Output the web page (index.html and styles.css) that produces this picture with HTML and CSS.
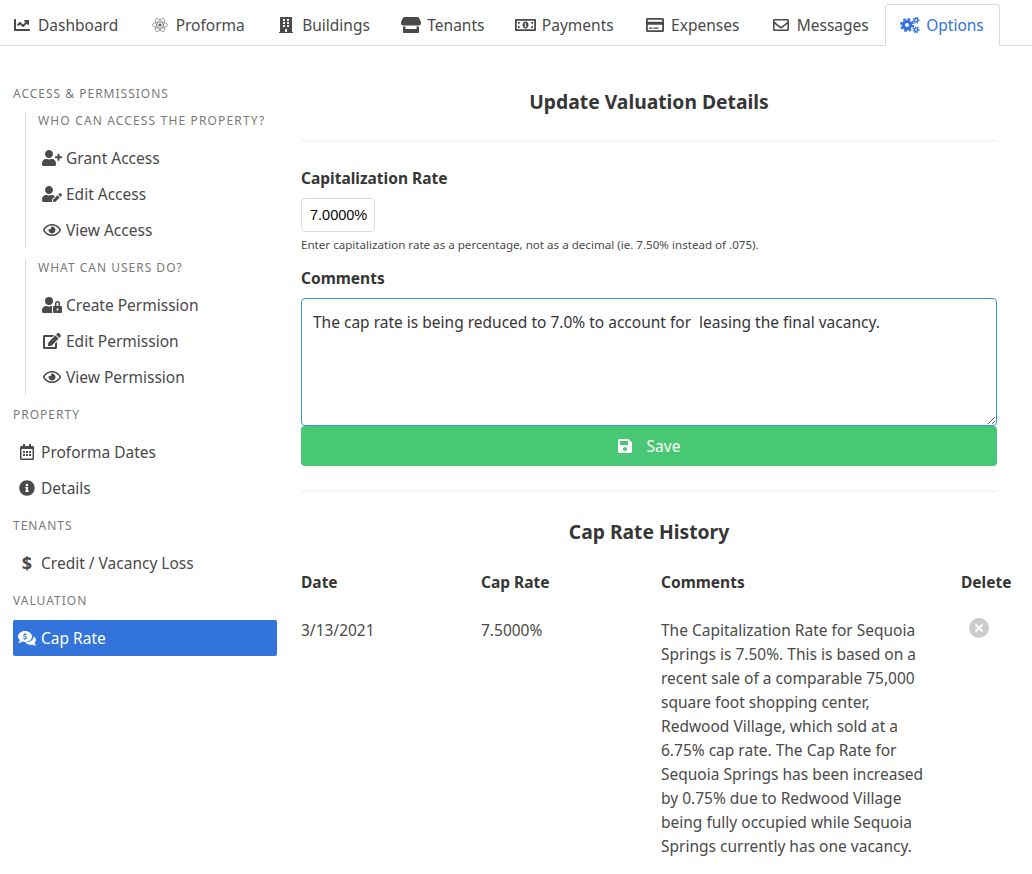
FILE: index.html
```html
<!DOCTYPE html>
<html>
<head>
    <meta charset="UTF-8">
    <title>Update Valuation Details</title>
    <link rel="stylesheet" href="styles.css">
</head>
<body>
<!--tabs-->
<ul class="tabs">
    <li><a><span class="icon"><svg width="16" height="16" viewBox="0 0 512 512"><path d="M496 384H64V80c0-8.84-7.16-16-16-16H16C7.16 64 0 71.16 0 80v336c0 17.67 14.33 32 32 32h464c8.84 0 16-7.16 16-16v-32c0-8.84-7.16-16-16-16zM464 96H345.94c-21.38 0-32.09 25.85-16.97 40.97l32.4 32.4L288 242.75l-73.37-73.37c-12.5-12.5-32.76-12.5-45.25 0l-68.69 68.69c-6.25 6.25-6.25 16.38 0 22.63l22.62 22.62c6.25 6.25 16.38 6.25 22.63 0L192 237.25l73.37 73.37c12.5 12.5 32.76 12.5 45.25 0l96-96 32.4 32.4c15.12 15.12 40.97 4.41 40.97-16.97V112c.01-8.84-7.15-16-15.99-16z"/></svg></span>Dashboard</a></li>
    <li><a><span class="icon"><svg class="outline atom" width="16" height="16" viewBox="0 0 16 16"><ellipse cx="8" cy="8" rx="7.5" ry="3"/><ellipse cx="8" cy="8" rx="7.5" ry="3" transform="rotate(60 8 8)"/><ellipse cx="8" cy="8" rx="7.5" ry="3" transform="rotate(120 8 8)"/><circle cx="8" cy="8" r="1.200" fill="#4a4a4a"/></svg></span>Proforma</a></li>
    <li><a><span class="icon"><svg width="14" height="16" viewBox="0 0 448 512"><path d="M436 480h-20V24c0-13.255-10.745-24-24-24H56C42.745 0 32 10.745 32 24v456H12c-6.627 0-12 5.373-12 12v20h448v-20c0-6.627-5.373-12-12-12zM128 76c0-6.627 5.373-12 12-12h40c6.627 0 12 5.373 12 12v40c0 6.627-5.373 12-12 12h-40c-6.627 0-12-5.373-12-12V76zm0 96c0-6.627 5.373-12 12-12h40c6.627 0 12 5.373 12 12v40c0 6.627-5.373 12-12 12h-40c-6.627 0-12-5.373-12-12v-40zm52 148h-40c-6.627 0-12-5.373-12-12v-40c0-6.627 5.373-12 12-12h40c6.627 0 12 5.373 12 12v40c0 6.627-5.373 12-12 12zm76 160h-64v-84c0-6.627 5.373-12 12-12h40c6.627 0 12 5.373 12 12v84zm64-172c0 6.627-5.373 12-12 12h-40c-6.627 0-12-5.373-12-12v-40c0-6.627 5.373-12 12-12h40c6.627 0 12 5.373 12 12v40zm0-96c0 6.627-5.373 12-12 12h-40c-6.627 0-12-5.373-12-12v-40c0-6.627 5.373-12 12-12h40c6.627 0 12 5.373 12 12v40zm0-96c0 6.627-5.373 12-12 12h-40c-6.627 0-12-5.373-12-12V76c0-6.627 5.373-12 12-12h40c6.627 0 12 5.373 12 12v40z"/></svg></span>Buildings</a></li>
    <li><a><span class="icon"><svg width="20" height="16" viewBox="0 0 20 16"><path d="M3.200 0h13.600c.5 0 .9.3 1.100.7L20 5v1.200c0 1.300-1.200 2.300-2.500 2.300H2.500C1.200 8.500 0 7.500 0 6.200V5L2.100.7C2.300.3 2.700 0 3.200 0zM2 9.500h2.500V12h11V9.500H18V15c0 .6-.4 1-1 1H3c-.6 0-1-.4-1-1z"/></svg></span>Tenants</a></li>
    <li><a><span class="icon"><svg width="21" height="16" viewBox="0 0 21 16"><path fill-rule="evenodd" d="M1 2h19c.6 0 1 .4 1 1v10c0 .6-.4 1-1 1H1c-.6 0-1-.4-1-1V3c0-.6.4-1 1-1zm.8 1.800v8.400h17.400V3.800zM3 5h2.200C5 6.200 4.200 7 3 7.200zm12.800 0H18v2.200c-1.200-.2-2-1-2.200-2.200zM3 8.800c1.200.2 2 1 2.200 2.200H3zM18 8.800V11h-2.200c.2-1.200 1-2 2.200-2.200zM10.500 4.500c1.800 0 3 1.600 3 3.500s-1.200 3.500-3 3.500-3-1.600-3-3.500 1.200-3.500 3-3.500z"/><path d="M9.600 6.300h1.300v3h.6v.8H9.500v-.8h.5V7.200h-.4z" fill="#fff"/></svg></span>Payments</a></li>
    <li><a><span class="icon"><svg width="18" height="16" viewBox="0 0 18 16"><path fill-rule="evenodd" d="M1.500 1h15c.8 0 1.500.7 1.500 1.500v11c0 .8-.7 1.500-1.500 1.500h-15C.7 15 0 14.300 0 13.500v-11C0 1.700.7 1 1.500 1zm.3 6.800v5.400h14.400V7.800zm0-5v1.900h14.400V2.800z"/><rect x="3" y="10.500" width="3.500" height="1.300"/><rect x="7.500" y="10.500" width="5" height="1.300"/></svg></span>Expenses</a></li>
    <li><a><span class="icon"><svg width="16" height="16" viewBox="0 0 16 16"><path fill-rule="evenodd" d="M1.500 2h13c.8 0 1.500.7 1.500 1.500v9c0 .8-.7 1.500-1.500 1.500h-13C.7 14 0 13.300 0 12.500v-9C0 2.700.7 2 1.500 2zm.1 1.500v1.300c.8.700 2 1.600 4.700 3.800.6.500 1.200 1 1.700 1s1.100-.5 1.700-1c2.700-2.200 3.900-3.100 4.700-3.800V3.500zm0 3.300v5.700h12.800V6.800c-.7.600-1.700 1.400-3.700 3-.8.700-1.800 1.700-2.700 1.700s-1.900-1-2.700-1.700c-2-1.600-3-2.400-3.700-3z"/></svg></span>Messages</a></li>
    <li class="active"><a><span class="icon"><svg class="outline" width="20" height="16" viewBox="0 0 20 16"><circle cx="7" cy="8" r="3.600" stroke-width="3.200"/><circle cx="7" cy="8" r="5.900" stroke-width="2.200" stroke-dasharray="2.600 2.030"/><circle cx="16" cy="3.200" r="1.700" stroke-width="1.400"/><circle cx="16" cy="3.200" r="2.900" stroke-width="1.200" stroke-dasharray="1.300 1.130"/><circle cx="16" cy="12.800" r="1.700" stroke-width="1.400"/><circle cx="16" cy="12.800" r="2.900" stroke-width="1.200" stroke-dasharray="1.300 1.130"/></svg></span>Options</a></li>
</ul>

<div class="columns">
    <!--left menu-->
    <aside class="menu">
        <p class="menuLabel">Access &amp; Permissions</p>
        <div class="subList first">
            <p class="menuLabel">Who can access the property?</p>
            <a class="menuItem"><span class="mIcon"><svg width="20" height="16" viewBox="0 0 640 512"><path d="M224 256c70.700 0 128-57.300 128-128S294.700 0 224 0 96 57.300 96 128s57.300 128 128 128zm89.600 32h-16.700c-22.200 10.200-46.900 16-72.900 16s-50.600-5.800-72.900-16h-16.700C60.200 288 0 348.200 0 422.400V464c0 26.500 21.500 48 48 48h352c26.500 0 48-21.500 48-48v-41.600c0-74.200-60.200-134.400-134.400-134.400zM624 200h-64v-64c0-8.800-7.200-16-16-16h-32c-8.800 0-16 7.200-16 16v64h-64c-8.800 0-16 7.200-16 16v32c0 8.800 7.200 16 16 16h64v64c0 8.800 7.200 16 16 16h32c8.800 0 16-7.200 16-16v-64h64c8.800 0 16-7.200 16-16v-32c0-8.800-7.200-16-16-16z"/></svg></span>Grant Access</a>
            <a class="menuItem"><span class="mIcon"><svg width="20" height="16" viewBox="0 0 640 512"><path d="M224 256c70.700 0 128-57.300 128-128S294.700 0 224 0 96 57.300 96 128s57.300 128 128 128zm89.600 32h-16.700c-22.200 10.200-46.900 16-72.900 16s-50.600-5.800-72.900-16h-16.700C60.200 288 0 348.200 0 422.400V464c0 26.500 21.500 48 48 48h275c-2.400-6.800-3.200-14-2.400-21.300l6.800-60.900 1.200-11.100 7.900-7.900 77.300-77.300c-24.500-27.700-60-45.500-99.900-45.500zm45.300 145.300l-6.800 61c-1.100 10.200 7.500 18.800 17.600 17.600l60.900-6.800 137.900-137.900-71.700-71.700zM633 268.900L595.100 231c-9.300-9.300-24.500-9.300-33.800 0l-37.800 37.800-4.100 4.100 71.800 71.700 41.800-41.800c9.300-9.400 9.300-24.500 0-33.900z"/></svg></span>Edit Access</a>
            <a class="menuItem"><span class="mIcon"><svg width="18" height="16" viewBox="0 0 576 512"><path d="M288 144a110.940 110.940 0 0 0-31.240 5 55.400 55.400 0 0 1 7.240 27 56 56 0 0 1-56 56 55.400 55.400 0 0 1-27-7.240A111.710 111.710 0 1 0 288 144zm284.520 97.400C518.290 135.590 410.930 64 288 64S57.680 135.640 3.480 241.410a32.350 32.350 0 0 0 0 29.190C57.710 376.410 165.070 448 288 448s230.320-71.640 284.520-177.410a32.350 32.350 0 0 0 0-29.190zM288 400c-98.650 0-189.090-55-237.930-144C98.910 167 189.340 112 288 112s189.090 55 237.930 144C477.100 345 386.660 400 288 400z"/></svg></span>View Access</a>
        </div>
        <div class="subList">
            <p class="menuLabel">What can users do?</p>
            <a class="menuItem"><span class="mIcon"><svg width="20" height="16" viewBox="0 0 640 512"><path d="M224 256A128 128 0 1 0 96 128a128 128 0 0 0 128 128zm96 64a63.080 63.080 0 0 1 8.100-30.500c-4.800-.5-9.500-1.500-14.500-1.500h-16.700a174.080 174.080 0 0 1-145.800 0h-16.700A134.430 134.430 0 0 0 0 422.400V464a48 48 0 0 0 48 48h280.900a63.540 63.540 0 0 1-8.900-32zm288-32h-32v-80a80 80 0 0 0-160 0v80h-32a32 32 0 0 0-32 32v160a32 32 0 0 0 32 32h224a32 32 0 0 0 32-32V320a32 32 0 0 0-32-32zM496 432a32 32 0 1 1 32-32 32 32 0 0 1-32 32zm32-144h-64v-80a32 32 0 0 1 64 0z"/></svg></span>Create Permission</a>
            <a class="menuItem"><span class="mIcon"><svg width="18" height="16" viewBox="0 0 576 512"><path d="M402.600 83.200l90.200 90.200c3.800 3.800 3.800 10 0 13.800L274.400 405.600l-92.800 10.300c-12.400 1.400-22.900-9.100-21.500-21.500l10.300-92.800L388.800 83.200c3.800-3.800 10-3.800 13.800 0zm162-22.900l-48.800-48.800c-15.200-15.200-39.900-15.200-55.200 0l-35.400 35.400c-3.800 3.800-3.800 10 0 13.800l90.200 90.200c3.800 3.800 10 3.800 13.800 0l35.400-35.400c15.200-15.300 15.200-40 0-55.200zM384 346.200V448H64V128h229.800c3.200 0 6.200-1.300 8.500-3.500l40-40c7.600-7.600 2.200-20.500-8.500-20.500H48C21.500 64 0 85.500 0 112v352c0 26.500 21.500 48 48 48h352c26.500 0 48-21.500 48-48V306.200c0-10.700-12.900-16-20.500-8.500l-40 40c-2.200 2.300-3.500 5.300-3.500 8.500z"/></svg></span>Edit Permission</a>
            <a class="menuItem"><span class="mIcon"><svg width="18" height="16" viewBox="0 0 576 512"><path d="M288 144a110.940 110.940 0 0 0-31.240 5 55.400 55.400 0 0 1 7.240 27 56 56 0 0 1-56 56 55.400 55.400 0 0 1-27-7.240A111.710 111.710 0 1 0 288 144zm284.520 97.400C518.290 135.590 410.930 64 288 64S57.680 135.640 3.480 241.410a32.350 32.350 0 0 0 0 29.190C57.710 376.410 165.070 448 288 448s230.320-71.640 284.520-177.410a32.350 32.350 0 0 0 0-29.190zM288 400c-98.650 0-189.090-55-237.930-144C98.910 167 189.340 112 288 112s189.090 55 237.930 144C477.100 345 386.660 400 288 400z"/></svg></span>View Permission</a>
        </div>
        <p class="menuLabel section">Property</p>
        <a class="menuItem"><span class="mIcon"><svg width="14" height="16" viewBox="0 0 448 512"><path d="M148 288h-40c-6.600 0-12-5.400-12-12v-40c0-6.600 5.400-12 12-12h40c6.600 0 12 5.400 12 12v40c0 6.600-5.400 12-12 12zm108-12v-40c0-6.600-5.400-12-12-12h-40c-6.600 0-12 5.400-12 12v40c0 6.600 5.400 12 12 12h40c6.600 0 12-5.400 12-12zm96 0v-40c0-6.600-5.400-12-12-12h-40c-6.600 0-12 5.400-12 12v40c0 6.600 5.400 12 12 12h40c6.600 0 12-5.400 12-12zm-96 96v-40c0-6.600-5.400-12-12-12h-40c-6.600 0-12 5.400-12 12v40c0 6.600 5.400 12 12 12h40c6.600 0 12-5.400 12-12zm-96 0v-40c0-6.600-5.400-12-12-12h-40c-6.600 0-12 5.400-12 12v40c0 6.600 5.400 12 12 12h40c6.600 0 12-5.400 12-12zm192 0v-40c0-6.600-5.400-12-12-12h-40c-6.600 0-12 5.400-12 12v40c0 6.600 5.400 12 12 12h40c6.600 0 12-5.400 12-12zm96-260v352c0 26.500-21.500 48-48 48H48c-26.500 0-48-21.500-48-48V112c0-26.500 21.500-48 48-48h48V12c0-6.600 5.400-12 12-12h40c6.600 0 12 5.400 12 12v52h128V12c0-6.600 5.400-12 12-12h40c6.600 0 12 5.400 12 12v52h48c26.500 0 48 21.500 48 48zm-48 346V160H48v298c0 3.300 2.700 6 6 6h340c3.300 0 6-2.700 6-6z"/></svg></span>Proforma Dates</a>
        <a class="menuItem"><span class="mIcon"><svg width="16" height="16" viewBox="0 0 512 512"><path d="M256 8C119 8 8 119.100 8 256c0 137 111 248 248 248s248-111 248-248C504 119.100 393 8 256 8zm0 110c23.200 0 42 18.800 42 42s-18.800 42-42 42-42-18.800-42-42 18.800-42 42-42zm56 254c0 6.600-5.400 12-12 12h-88c-6.600 0-12-5.400-12-12v-24c0-6.600 5.400-12 12-12h12v-64h-12c-6.600 0-12-5.400-12-12v-24c0-6.600 5.400-12 12-12h64c6.600 0 12 5.400 12 12v100h12c6.600 0 12 5.400 12 12v24z"/></svg></span>Details</a>
        <p class="menuLabel section">Tenants</p>
        <a class="menuItem"><span class="mIcon dollar">$</span>Credit / Vacancy Loss</a>
        <p class="menuLabel section">Valuation</p>
        <a class="menuItem current"><span class="mIcon"><svg width="18" height="16" viewBox="0 0 18 16"><path d="M7 1c3.900 0 7 2.500 7 5.500S10.900 12 7 12c-.9 0-1.800-.1-2.600-.4C3.400 12.400 2.200 13 .6 13c-.2 0-.3-.3-.1-.5.6-.6 1.200-1.500 1.400-2.500C.7 9 0 7.800 0 6.500 0 3.500 3.100 1 7 1z"/><path d="M15.200 6.200C16.900 7 18 8.400 18 10c0 1.100-.5 2.100-1.400 2.900.2.900.7 1.700 1.300 2.200.2.200.1.500-.2.500-1.400 0-2.500-.5-3.400-1.200-.7.200-1.400.3-2.100.3-2.100 0-3.900-.9-5-2.200 4.500.1 8.300-2.300 8.300-5.900z"/><path d="M7.500 3v.9c.6.100 1.100.4 1.400.8l-.7.600c-.3-.3-.7-.5-1.200-.5-.5 0-.8.200-.8.500 0 .9 2.800.5 2.800 2.300 0 .8-.6 1.300-1.500 1.500v.9h-1v-.9c-.7-.1-1.300-.5-1.600-1l.8-.6c.3.400.8.700 1.300.7s.9-.2.900-.6c0-.9-2.700-.5-2.700-2.300 0-.8.600-1.300 1.300-1.400V3z" fill="#3273dc"/></svg></span>Cap Rate</a>
    </aside>

    <!--main form-->
    <main class="content">
        <h2 class="title">Update Valuation Details</h2>
        <hr class="line">
        <label class="label">Capitalization Rate</label>
        <input class="rateInput" type="text" value="7.0000%">
        <p class="help">Enter capitalization rate as a percentage, not as a decimal (ie. 7.50% instead of .075).</p>
        <label class="label">Comments</label>
        <textarea class="commentBox">The cap rate is being reduced to 7.0% to account for  leasing the final vacancy.</textarea>
        <button class="saveBtn"><svg width="14" height="16" viewBox="0 0 448 512"><path d="M433.900 129.900l-83.900-83.900A48 48 0 0 0 316.100 32H48C21.500 32 0 53.500 0 80v352c0 26.500 21.500 48 48 48h352c26.500 0 48-21.500 48-48V163.900a48 48 0 0 0-14.100-34zM224 416c-35.300 0-64-28.700-64-64 0-35.300 28.700-64 64-64s64 28.700 64 64c0 35.300-28.700 64-64 64zm96-304.500V212c0 6.600-5.400 12-12 12H76c-6.600 0-12-5.400-12-12V108c0-6.600 5.400-12 12-12h228.500c3.200 0 6.200 1.300 8.500 3.500l3.500 3.500c2.200 2.300 3.500 5.300 3.500 8.500z"/></svg><span>Save</span></button>
        <hr class="line second">
        <h2 class="title">Cap Rate History</h2>
        <table class="history">
            <thead>
                <tr><th class="colDate">Date</th><th class="colRate">Cap Rate</th><th class="colComments">Comments</th><th>Delete</th></tr>
            </thead>
            <tbody>
                <tr>
                    <td>3/13/2021</td>
                    <td>7.5000%</td>
                    <td>The Capitalization Rate for Sequoia Springs is 7.50%. This is based on a recent sale of a comparable 75,000 square foot shopping center, Redwood Village, which sold at a 6.75% cap rate. The Cap Rate for Sequoia Springs has been increased by 0.75% due to Redwood Village being fully occupied while Sequoia Springs currently has one vacancy.</td>
                    <td class="delCell"><span class="delBtn"><svg width="10" height="10" viewBox="0 0 10 10" stroke="#fff" stroke-width="2.200"><path d="M1.500 1.500l7 7M8.500 1.500l-7 7"/></svg></span></td>
                </tr>
            </tbody>
        </table>
    </main>
</div>
</body>
</html>
```

FILE: styles.css
```css
* {
    margin: 0;
    padding: 0;
    box-sizing: border-box;
}
body {
    font-family: "Noto Sans", sans-serif;
    font-size: 15.5px;
    line-height: 24px;
    color: #4a4a4a;
    background-color: #fff;
}
svg {
    fill: currentColor;
    display: block;
}
svg.outline {
    fill: none;
    stroke: currentColor;
}
svg.atom {
    stroke: #777;
    stroke-width: .7;
}

/* tabs */
.tabs {
    list-style: none;
    display: flex;
    height: 46px;
    padding-top: 4px;
    margin-left: -3px;
    border-bottom: 1px solid #dbdbdb;
}
.tabs a {
    display: flex;
    align-items: center;
    height: 42px;
    padding: 0 15.4px 0 12px;
    border: 1px solid transparent;
    border-radius: 4px 4px 0 0;
}
.tabs .icon {
    width: 24px;
    height: 24px;
    margin-right: 4px;
    display: flex;
    justify-content: center;
    align-items: center;
}
.tabs .active a {
    color: #3273dc;
    background-color: #fff;
    border-color: #dbdbdb;
    border-bottom-color: #fff;
}

/* layout */
.columns {
    display: flex;
    align-items: flex-start;
    padding-left: 13px;
}

/* left menu */
.menu {
    width: 264px;
    padding-top: 39px;
    flex-shrink: 0;
}
.menuLabel {
    font-size: 12px;
    line-height: 18px;
    letter-spacing: 1px;
    text-transform: uppercase;
    color: #7a7a7a;
    margin-bottom: 10px;
}
.menuLabel.section {
    margin-top: 11px;
}
.subList {
    margin: 11px 0 0 12px;
    padding-left: 12px;
    border-left: 1px solid #dbdbdb;
}
.subList.first {
    margin-top: -1px;
}
.subList.first .menuLabel {
    letter-spacing: 1.15px;
}
.menuItem {
    display: flex;
    align-items: center;
    height: 36px;
    padding-left: 4px;
    border-radius: 2px;
}
.mIcon {
    width: 20px;
    margin-right: 4px;
    display: flex;
    justify-content: center;
    align-items: center;
}
.dollar {
    font-weight: 700;
    font-size: 18px;
}
.current {
    background-color: #3273dc;
    color: #fff;
}

/* main form */
.content {
    width: 696px;
    margin-left: 24px;
    padding-top: 44px;
}
.title {
    font-size: 19.3px;
    line-height: 24px;
    font-weight: 700;
    color: #363636;
    text-align: center;
}
.line {
    height: 2px;
    border: none;
    background-color: #f5f5f5;
    margin: 26px 0 24px;
}
.line.second {
    margin: 24px 0 28px;
}
.label {
    display: block;
    font-weight: 700;
    color: #363636;
    margin-bottom: 8px;
}
.rateInput {
    display: block;
    width: 74px;
    height: 34px;
    padding: 0 7px 1px 8px;
    font-family: "Liberation Sans", sans-serif;
    font-size: 14.5px;
    color: #0a0a0a;
    border: 1px solid #dbdbdb;
    border-radius: 4px;
}
.help {
    font-size: 11.6px;
    line-height: 18px;
    margin: 4px 0 12px;
}
.commentBox {
    display: block;
    width: 100%;
    height: 128px;
    padding: 11px 11px;
    font-family: "Noto Sans", sans-serif;
    font-size: 15.5px;
    line-height: 24px;
    color: #363636;
    border: 1px solid #3298dc;
    border-radius: 4px;
    outline: none;
}
.saveBtn {
    display: flex;
    justify-content: center;
    align-items: center;
    width: 100%;
    height: 40px;
    font-family: "Noto Sans", sans-serif;
    font-size: 15.5px;
    color: #fff;
    background-color: #48c774;
    border: none;
    border-radius: 4px;
}
.saveBtn span {
    margin-left: 15px;
}

/* history table */
.history {
    border-collapse: collapse;
    table-layout: fixed;
    width: 712px;
    margin-top: 26px;
}
.history th {
    text-align: left;
    font-weight: 700;
    color: #363636;
    padding-bottom: 24px;
}
.history td {
    vertical-align: top;
}
.colDate, .colRate {
    width: 180px;
}
.colComments {
    width: 300px;
}
.history td:nth-child(3) {
    padding-right: 36px;
}
.delBtn {
    display: flex;
    justify-content: center;
    align-items: center;
    width: 20px;
    height: 20px;
    margin: 0 0 0 8px;
    border-radius: 50%;
    background-color: #ccc;
}
```
